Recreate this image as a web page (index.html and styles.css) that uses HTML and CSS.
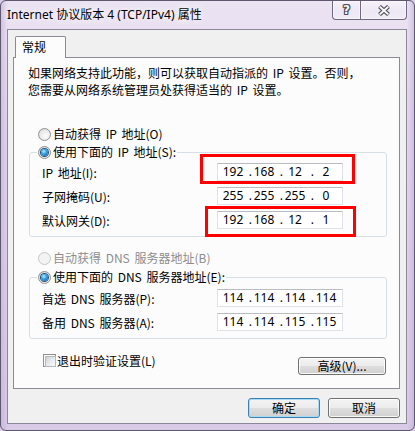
FILE: index.html
```html
<!DOCTYPE html>
<html lang="zh-CN">
<head>
<meta charset="utf-8">
<title>Internet 协议版本 4 (TCP/IPv4) 属性</title>
<link rel="stylesheet" href="styles.css">
</head>
<body>
<div class="window">
  <div class="titlebar">
    <div class="title">Internet 协议版本 4 (TCP/IPv4) 属性</div>
    <div class="caption">
      <div class="cap-btn cap-help"><span class="q">?</span></div>
      <div class="cap-btn cap-close">
        <svg width="14" height="11" viewBox="0 0 14 11" aria-hidden="true">
          <path d="M2.5 1.5 L11.5 9.5 M11.5 1.5 L2.5 9.5" stroke="#4d4b55" stroke-width="4.2" fill="none"/>
          <path d="M2.8 1.8 L11.2 9.2 M11.2 1.8 L2.8 9.2" stroke="#f7f7f7" stroke-width="2" fill="none"/>
        </svg>
      </div>
    </div>
  </div>

  <div class="client">
    <div class="tabs"><div class="tab">常规</div></div>
    <div class="panel">
      <p class="desc"><span class="desc-line">如果网络支持此功能，则可以获取自动指派的 IP 设置。否则，</span><span class="desc-line">您需要从网络系统管理员处获得适当的 IP 设置。</span></p>

      <div class="opt opt-ip-auto"><span class="radio"></span><span>自动获得 IP 地址(O)</span></div>

      <fieldset class="group">
        <legend><span class="legend-line"><span class="radio checked"></span><span>使用下面的 IP 地址(S):</span></span></legend>
        <div class="row"><span class="label">IP 地址(I):</span>
          <div class="ip"><span class="oct">192</span><span class="dot">.</span><span class="oct">168</span><span class="dot">.</span><span class="oct">12</span><span class="dot">.</span><span class="oct">2</span></div>
        </div>
        <div class="row"><span class="label">子网掩码(U):</span>
          <div class="ip"><span class="oct">255</span><span class="dot">.</span><span class="oct">255</span><span class="dot">.</span><span class="oct">255</span><span class="dot">.</span><span class="oct">0</span></div>
        </div>
        <div class="row"><span class="label">默认网关(D):</span>
          <div class="ip"><span class="oct">192</span><span class="dot">.</span><span class="oct">168</span><span class="dot">.</span><span class="oct">12</span><span class="dot">.</span><span class="oct">1</span></div>
        </div>
      </fieldset>

      <div class="opt opt-dns-auto disabled"><span class="radio disabled"></span><span>自动获得 DNS 服务器地址(B)</span></div>

      <fieldset class="group group-dns">
        <legend><span class="legend-line"><span class="radio checked"></span><span>使用下面的 DNS 服务器地址(E):</span></span></legend>
        <div class="row"><span class="label">首选 DNS 服务器(P):</span>
          <div class="ip"><span class="oct">114</span><span class="dot">.</span><span class="oct">114</span><span class="dot">.</span><span class="oct">114</span><span class="dot">.</span><span class="oct">114</span></div>
        </div>
        <div class="row"><span class="label">备用 DNS 服务器(A):</span>
          <div class="ip"><span class="oct">114</span><span class="dot">.</span><span class="oct">114</span><span class="dot">.</span><span class="oct">115</span><span class="dot">.</span><span class="oct">115</span></div>
        </div>
      </fieldset>

      <div class="footer">
        <div class="check-row"><span class="checkbox"></span><span>退出时验证设置(L)</span></div>
        <button class="btn btn-adv" type="button">高级(V)...</button>
      </div>
    </div>
    <div class="actions">
      <button class="btn btn-default" type="button">确定</button>
      <button class="btn" type="button">取消</button>
    </div>
  </div>

  <div class="mark mark-ip"></div>
  <div class="mark mark-gw"></div>
</div>
</body>
</html>
```

FILE: styles.css
```css
* { box-sizing: border-box; }
html, body { margin: 0; padding: 0; }
body {
  width: 415px;
  height: 431px;
  overflow: hidden;
  background: #d8cce6;
  font-family: "Noto Sans CJK SC", sans-serif;
  font-size: 12px;
  color: #000;
}

.window {
  position: relative;
  width: 415px;
  height: 431px;
  border: 1px solid #5e586f;
  border-radius: 6px;
  background:
    linear-gradient(90deg, rgba(190,170,215,.55) 0px, rgba(190,170,215,0) 7px, rgba(190,170,215,0) 406px, rgba(190,170,215,.55) 413px),
    linear-gradient(180deg, #ebe3f2 0%, #e2d7ed 30%, #d9cbe7 100%);
  display: flex;
  flex-direction: column;
  overflow: hidden;
}

/* title bar */
.titlebar {
  height: 28px;
  flex: none;
  display: flex;
  justify-content: space-between;
  align-items: flex-start;
}
.title {
  padding: 6px 0 0 6px;
  font-family: "Noto Sans", "Noto Sans CJK SC", sans-serif;
  font-size: 12px;
  line-height: 16px;
  white-space: nowrap;
  text-shadow: 0 0 6px #fff, 0 0 10px rgba(255,255,255,.9);
}
.caption {
  display: flex;
  margin-right: 7px;
}
.cap-btn {
  height: 19px;
  display: flex;
  align-items: center;
  justify-content: center;
  border: 1px solid #6e6880;
  border-top: none;
  background: linear-gradient(180deg, rgba(255,255,255,.5) 0%, rgba(255,255,255,.2) 55%, rgba(255,255,255,.35) 100%);
  box-shadow: inset 0 0 0 1px rgba(255,255,255,.45);
}
.cap-help {
  width: 28px;
  border-right: none;
  border-radius: 0 0 0 4px;
}
.cap-close {
  width: 47px;
  border-radius: 0 0 4px 0;
}
.q {
  font-family: "DejaVu Sans", sans-serif;
  font-weight: bold;
  font-size: 12px;
  line-height: 12px;
  color: #f8f8f8;
  text-shadow: 1px 0 #4d4b55, -1px 0 #4d4b55, 0 1px #4d4b55, 0 -1px #4d4b55,
               1px 1px #4d4b55, -1px -1px #4d4b55, 1px -1px #4d4b55, -1px 1px #4d4b55;
}

/* client area */
.client {
  flex: none;
  margin-left: 6px;
  width: 400px;
  height: 395px;
  border: 1px solid #8c8898;
  background: #f0f0f0;
  padding: 0 6px 0 5px;
}
.tabs {
  display: flex;
  height: 28px;
  padding: 6px 0 0 2px;
}
.tab {
  position: relative;
  z-index: 1;
  width: 51px;
  height: 22px;
  border: 1px solid #898c95;
  border-bottom: none;
  border-radius: 2px 2px 0 0;
  background: #fcfcfc;
  padding-left: 6px;
  line-height: 20px;
}
.panel {
  margin-top: -1px;
  width: 387px;
  height: 332px;
  border: 1px solid #898c95;
  background: #fcfcfc;
  word-spacing: 2px;
}

.desc {
  margin: 6px 0 0 14px;
  white-space: nowrap;
}
.desc-line {
  display: block;
  height: 17px;
  line-height: 17px;
}

.opt {
  display: flex;
  align-items: center;
  height: 16px;
  line-height: 16px;
  margin-left: 24px;
  white-space: nowrap;
}
.opt-ip-auto { margin-top: 28px; }
.opt-dns-auto { margin-top: 13px; }
.opt.disabled { color: #8d8d8d; }

.radio {
  flex: none;
  width: 13px;
  height: 13px;
  margin-right: 2px;
  border-radius: 50%;
  border: 1px solid #8e8f8f;
  background: radial-gradient(circle at 60% 65%, #fdfdfd 0%, #eaeaea 55%, #cfcfcf 100%);
  display: inline-grid;
  place-items: center;
}
.radio.checked::after {
  content: "";
  width: 7px;
  height: 7px;
  border-radius: 50%;
  background: radial-gradient(circle at 40% 35%, #b5ecff 0%, #3aa3e3 40%, #115393 100%);
  box-shadow: 0 0 0 1px #1e4f7e;
}
.radio.disabled {
  border-color: #c6c6c6;
  background: #f3f3f3;
}

.group {
  margin: 2px 12px 0 15px;
  padding: 0 7px 4px 7px;
  border: 1px solid #d5dfe5;
  border-radius: 3px;
  min-width: 0;
}
.group legend {
  padding: 0 1px;
}
.legend-line {
  display: flex;
  align-items: center;
  height: 16px;
  line-height: 16px;
  white-space: nowrap;
}
.group-dns {
  margin-top: 3px;
  padding-top: 1px;
}

.row {
  display: flex;
  align-items: center;
  height: 24px;
  padding-left: 5px;
}
.label {
  width: 175px;
  flex: none;
  white-space: nowrap;
}

.ip {
  flex: none;
  width: 126px;
  height: 18px;
  display: flex;
  align-items: center;
  padding-left: 4px;
  background: #fff;
  border: 1px solid #dfe2e8;
  border-top-color: #b9bcc3;
  font-family: "Noto Sans", sans-serif;
  font-size: 12px;
  line-height: 16px;
  word-spacing: 0;
}
.oct {
  width: 22px;
  text-align: center;
}
.dot {
  width: 9px;
  text-align: right;
  padding-right: 1px;
}

.footer {
  display: flex;
  justify-content: space-between;
  align-items: flex-start;
  padding: 0 13px 0 29px;
}
.check-row {
  display: flex;
  align-items: center;
  height: 16px;
  margin-top: 13px;
  white-space: nowrap;
}
.checkbox {
  flex: none;
  width: 13px;
  height: 13px;
  margin-right: 1px;
  border: 1px solid #8e8f8f;
  background: #fff;
  padding: 1px;
}
.checkbox::after {
  content: "";
  display: block;
  width: 100%;
  height: 100%;
  border: 1px solid #b5b8bd;
  background: linear-gradient(135deg, #cdd1d7 0%, #eceef0 60%, #f8f8f8 100%);
}

.btn {
  font-family: "Noto Sans CJK SC", sans-serif;
  font-size: 12px;
  line-height: 16px;
  color: #000;
  padding: 0;
  height: 20px;
  border: 1px solid #707070;
  border-radius: 3px;
  background: linear-gradient(180deg, #f4f4f4 0%, #ececec 48%, #dedede 52%, #d0d0d0 100%);
  box-shadow: inset 0 0 0 1px rgba(255,255,255,.85);
}
.btn-adv {
  width: 88px;
  height: 18px;
  margin-top: 18px;
}
.btn-default {
  border-color: #3c7fb1;
  box-shadow: inset 0 0 0 1px #a6dbf6;
}

.actions {
  width: 387px;
  margin-top: 9px;
  display: flex;
  justify-content: flex-end;
  gap: 8px;
}
.actions .btn { width: 72px; }

/* red annotation boxes over the form */
.mark {
  position: absolute;
  border: 3px solid #ff0000;
}
.mark-ip {
  left: 199px;
  top: 153px;
  width: 155px;
  height: 30px;
}
.mark-gw {
  left: 204px;
  top: 205px;
  width: 151px;
  height: 31px;
}
```
